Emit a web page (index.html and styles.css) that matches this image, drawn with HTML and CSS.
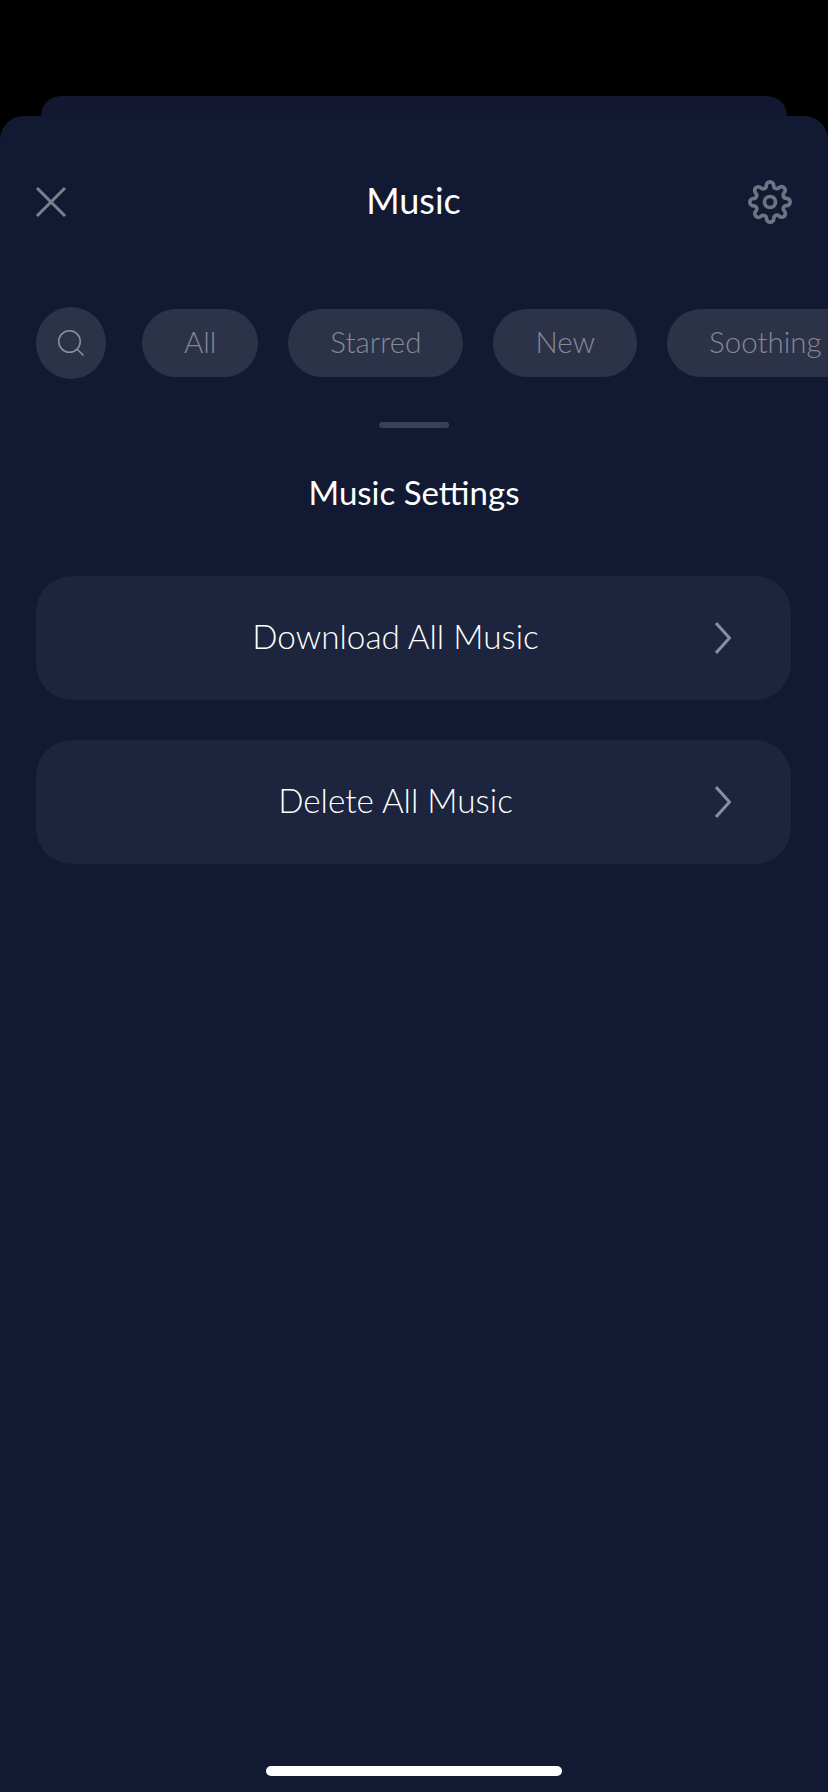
FILE: index.html
```html
<!DOCTYPE html>
<html lang="en">
<head>
    <meta charset="UTF-8">
    <meta name="viewport" content="width=device-width, initial-scale=1.0">
    <title>Music</title>
    <link rel="stylesheet" href="styles.css">
</head>
<body>
    <div class="sheet-back"></div>
    <div class="sheet">
        <div class="header">
            <svg class="close-icon" viewBox="0 0 32 32">
                <path d="M2 2 L30 30 M30 2 L2 30"></path>
            </svg>
            <h1>Music</h1>
            <svg class="gear-icon" viewBox="0 0 24 24">
                <circle cx="12" cy="12" r="3"></circle>
                <path d="M19.4 15a1.65 1.65 0 0 0 .33 1.82l.06.06a2 2 0 0 1 0 2.83 2 2 0 0 1-2.83 0l-.06-.06a1.65 1.65 0 0 0-1.82-.33 1.65 1.65 0 0 0-1 1.51V21a2 2 0 0 1-2 2 2 2 0 0 1-2-2v-.09A1.65 1.65 0 0 0 9 19.4a1.65 1.65 0 0 0-1.82.33l-.06.06a2 2 0 0 1-2.83 0 2 2 0 0 1 0-2.83l.06-.06a1.65 1.65 0 0 0 .33-1.82 1.65 1.65 0 0 0-1.51-1H3a2 2 0 0 1-2-2 2 2 0 0 1 2-2h.09A1.65 1.65 0 0 0 4.6 9a1.65 1.65 0 0 0-.33-1.82l-.06-.06a2 2 0 0 1 0-2.83 2 2 0 0 1 2.83 0l.06.06a1.65 1.65 0 0 0 1.82.33H9a1.65 1.65 0 0 0 1-1.51V3a2 2 0 0 1 2-2 2 2 0 0 1 2 2v.09a1.65 1.65 0 0 0 1 1.51 1.65 1.65 0 0 0 1.82-.33l.06-.06a2 2 0 0 1 2.83 0 2 2 0 0 1 0 2.83l-.06.06a1.65 1.65 0 0 0-.33 1.82V9a1.65 1.65 0 0 0 1.51 1H21a2 2 0 0 1 2 2 2 2 0 0 1-2 2h-.09a1.65 1.65 0 0 0-1.51 1z"></path>
            </svg>
        </div>

        <div class="chips">
            <div class="search-chip">
                <svg class="search-icon" viewBox="0 0 26 26">
                    <circle cx="11.5" cy="11.5" r="10.75"></circle>
                    <path d="M19 19 L25.5 25.5"></path>
                </svg>
            </div>
            <div class="chip">All</div>
            <div class="chip">Starred</div>
            <div class="chip">New</div>
            <div class="chip">Soothing</div>
        </div>

        <div class="handle"></div>
        <h2>Music Settings</h2>

        <div class="actions">
            <div class="action">
                <span class="action-label">Download All Music</span>
                <svg class="chevron" viewBox="0 0 16 32">
                    <path d="M1 1 L14.5 16 L1 31"></path>
                </svg>
            </div>
            <div class="action">
                <span class="action-label">Delete All Music</span>
                <svg class="chevron" viewBox="0 0 16 32">
                    <path d="M1 1 L14.5 16 L1 31"></path>
                </svg>
            </div>
        </div>

        <div class="home-bar"></div>
    </div>
</body>
</html>
```

FILE: styles.css
```css
body {
    font-family: 'Lato', 'Noto Sans', sans-serif;
    margin: 0;
    background-color: #000;
    height: 1792px;
    overflow: hidden;
}
.sheet-back {
    height: 20px;
    margin: 96px 41px 0 41px;
    background-color: #13172f;
    border-radius: 20px 20px 0 0;
}
.sheet {
    display: flex;
    flex-direction: column;
    height: 1676px;
    background-color: #121a33;
    border-radius: 24px 24px 0 0;
}
.header {
    display: grid;
    grid-template-columns: 1fr auto 1fr;
    align-items: center;
    height: 44px;
    margin-top: 64px;
    padding: 0 36px 0 35px;
}
.header h1 {
    margin: 0;
    padding-bottom: 4px;
    color: #fff;
    font-size: 36px;
    font-weight: 400;
    line-height: 36px;
}
.close-icon {
    width: 32px;
    height: 32px;
}
.close-icon path {
    fill: none;
    stroke: #7c808e;
    stroke-width: 3;
}
.gear-icon {
    justify-self: end;
    width: 44px;
    height: 44px;
}
.gear-icon path, .gear-icon circle {
    fill: none;
    stroke: #6f7382;
    stroke-width: 2;
}
.chips {
    display: flex;
    align-items: center;
    gap: 30px;
    margin-top: 83px;
    padding-left: 36px;
    overflow: hidden;
}
.search-chip {
    display: flex;
    align-items: center;
    justify-content: center;
    flex: none;
    width: 70px;
    height: 72px;
    margin-right: 6px;
    border-radius: 50%;
    background-color: #2c3248;
}
.search-icon {
    width: 26px;
    height: 26px;
}
.search-icon circle, .search-icon path {
    fill: none;
    stroke: #8d909e;
    stroke-width: 1.5;
}
.chip {
    flex: none;
    height: 68px;
    line-height: 65px;
    padding: 0 42px;
    border-radius: 34px;
    background-color: #2c3248;
    color: #858997;
    font-size: 29.5px;
    font-weight: 300;
}
.handle {
    width: 70px;
    height: 6px;
    margin: 43px auto 0;
    border-radius: 3px;
    background-color: #3a3f53;
}
h2 {
    margin: 44px 0 0;
    color: #fff;
    font-size: 33px;
    font-weight: 400;
    line-height: 40px;
    text-align: center;
}
.actions {
    display: flex;
    flex-direction: column;
    gap: 40px;
    margin: 64px 37px 0 36px;
}
.action {
    display: flex;
    align-items: center;
    height: 124px;
    padding: 0 60px 0 40px;
    border-radius: 36px;
    background-color: #1d243d;
}
.action-label {
    flex: 1;
    padding-bottom: 5px;
    color: #fff;
    font-size: 33.3px;
    font-weight: 300;
    text-align: center;
}
.chevron {
    width: 16px;
    height: 32px;
}
.chevron path {
    fill: none;
    stroke: #8b8e9b;
    stroke-width: 3;
}
.home-bar {
    width: 296px;
    height: 10px;
    margin: auto auto 16px;
    border-radius: 5px;
    background-color: #fff;
}
```
